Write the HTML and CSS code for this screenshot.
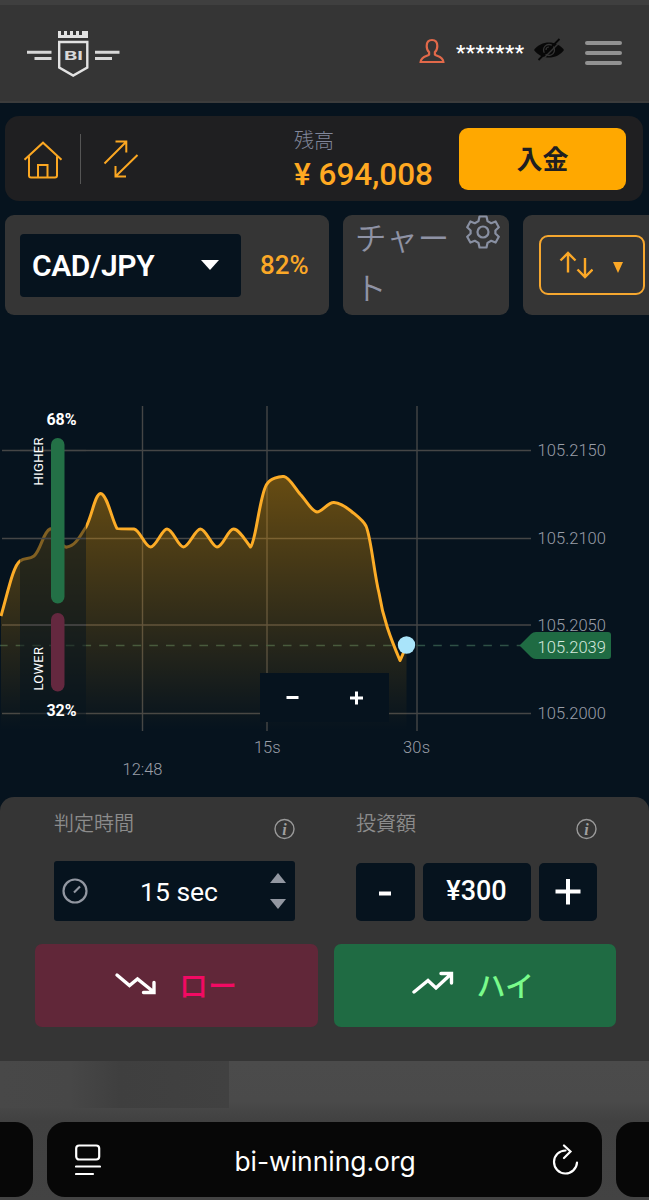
FILE: index.html
```
<!DOCTYPE html>
<html lang="ja">
<head>
  <meta charset="utf-8">
  <title>BI Winning</title>
  <link rel="stylesheet" href="styles.css">
</head>
<body>
  <header class="header">
    <svg class="logo" width="94" height="48" viewBox="0 0 94 48">
      <path class="logo-fill" d="M31 1h3v4h3V1h3v4h3V1h3v4h3V1h3v4h3V1h3v4h0V1h3v7H31z"/>
      <path class="logo-line" d="M32.2 12h28.100v25.500L46.200 45.500 32.200 37.500z"/>
      <path class="logo-wing" d="M0 22.200h24.500M7.500 28.400h17M68 22.200h24.500M68 28.400h17"/>
      <text class="logo-text" x="37" y="30" textLength="19" lengthAdjust="spacingAndGlyphs">BI</text>
    </svg>
    <div class="user">
      <svg class="user-icon" width="26" height="26" viewBox="0 0 26 26">
        <path d="M13 2c-4 0-5.300 3-5.300 6 0 3 1 5 2.400 6.200v2.400C9 18 2 18.200 1.600 24h22.800C24 18.200 17 18 15.900 16.600v-2.400C17.300 13 18.300 11 18.300 8c0-3-1.300-6-5.300-6z"/>
      </svg>
      <span class="user-name">*******</span>
      <svg class="eye" width="30" height="24" viewBox="0 0 30 24">
        <path d="M0 12C7 2 23 2 30 12 23 22 7 22 0 12z" fill="#080808"/>
        <circle cx="15" cy="12" r="5.500" fill="none" stroke="#353535" stroke-width="1.300"/>
        <path d="M12 12a3 3 0 0 1 3-3" fill="none" stroke="#353535" stroke-width="1.200"/>
        <path d="M7 23L28 2" stroke="#353535" stroke-width="1.500"/>
        <path d="M4.500 22L25.500 1" stroke="#080808" stroke-width="1.800"/>
      </svg>
    </div>
    <div class="burger"><span></span><span></span><span></span></div>
  </header>

  <section class="account">
    <svg class="home" width="40" height="38" viewBox="0 0 40 38">
      <path d="M1.500 18.800L20 1.700l18.500 17.100M6 15.500V34.500q0 2 2 2h24q2 0 2-2V15.500M15 36.500V24h9.500v12.500"/>
    </svg>
    <div class="divider"></div>
    <svg class="swap" width="36" height="40" viewBox="0 0 36 40">
      <path d="M1.500 24.500L23 3M12.500 2.500h10.800v11M34.500 16L12.500 37.500M12.500 27v10.500H23"/>
    </svg>
    <div class="balance">
      <div class="balance-label">残高</div>
      <div class="balance-value">¥ 694,008</div>
    </div>
    <button class="deposit">入金</button>
  </section>

  <section class="toolbar">
    <div class="card pair-card">
      <div class="pair"><span>CAD/JPY</span><i class="caret"></i></div>
      <span class="payout">82%</span>
    </div>
    <div class="card chart-card">
      <span class="chart-label">チャート</span>
      <svg class="gear" width="34" height="34" viewBox="0 0 34 34">
        <path d="M13.500 1.500h7l1 4.600 3.700 2.100 4.400-1.700 3.200 5.800-3.400 3.200v3l3.400 3.200-3.200 5.800-4.400-1.700-3.700 2.100-1 4.600h-7l-1-4.600-3.700-2.100-4.400 1.700-3.200-5.800 3.400-3.200v-3l-3.400-3.200 3.200-5.800 4.400 1.700 3.700-2.100z"/>
        <circle cx="17" cy="17" r="5.500"/>
      </svg>
    </div>
    <div class="card trade-card">
      <div class="trade-type">
        <svg width="34" height="28" viewBox="0 0 34 28">
          <path d="M9 21.500V2M1.500 9.500L9 2l7.500 7.500M26 7v19M18.500 18.500L26 26l7.500-7.500"/>
        </svg>
        <i class="caret-small"></i>
      </div>
    </div>
  </section>

  <section class="chart">
    <svg width="649" height="482" viewBox="0 315 649 482">
      <defs>
        <linearGradient id="area" gradientUnits="userSpaceOnUse" x1="0" y1="476" x2="0" y2="730">
          <stop offset="0" stop-color="#ffa500" stop-opacity=".39"/>
          <stop offset="1" stop-color="#ffa500" stop-opacity="0"/>
        </linearGradient>
      </defs>
      <g class="grid">
        <path d="M2 450.500H531M2 538.500H531M2 625H531M2 713.500H531"/>
        <path d="M142.500 406V731M267 406V731M417 406V731"/>
      </g>
      <path class="price-line" d="M-1 645.500H530"/>
      <path fill="url(#area)" d="M1 616C8 592 13 566 20 561C25 557 29 560 34 556C41 550 43 532 50 529C56 527 60 549 67 547C76 546 81 534 86 527C92 516 95 494 100.500 493.500C107 494 112 520 117 528.500Q118 529 134 529C140 530 145 547 150.500 547C156 547 162 529 167 529C173 529 178 547 183.500 547C189 547 195 529 200.500 529C206 529 212 547 217 547C223 547 228 529 233.500 529C239 529 245 540 250.500 547C256 542 260 492 267 484C270 479 279 476 284 476.500C289 477 295 488 300 494C306 500 311 511 317 512C322 512 328 502 334 502.500C340 503 346 507 351 511C357 516 363 520 366 526C371 537 374 573 379 593C383 618 390 637 400 660.500C402 657 404 651 406.500 645V730H1z"/>
      <path class="curve" d="M1 616C8 592 13 566 20 561C25 557 29 560 34 556C41 550 43 532 50 529C56 527 60 549 67 547C76 546 81 534 86 527C92 516 95 494 100.500 493.500C107 494 112 520 117 528.500Q118 529 134 529C140 530 145 547 150.500 547C156 547 162 529 167 529C173 529 178 547 183.500 547C189 547 195 529 200.500 529C206 529 212 547 217 547C223 547 228 529 233.500 529C239 529 245 540 250.500 547C256 542 260 492 267 484C270 479 279 476 284 476.500C289 477 295 488 300 494C306 500 311 511 317 512C322 512 328 502 334 502.500C340 503 346 507 351 511C357 516 363 520 366 526C371 537 374 573 379 593C383 618 390 637 400 660.500C402 657 404 651 406.500 645"/>
      <circle cx="406.500" cy="645" r="8.700" fill="#a9e4fa"/>

      <!-- sentiment gauge -->
      <rect x="20" y="405" width="66" height="320" fill="#06131e" opacity=".5"/>
      <path class="grid" d="M20 450.500H86M20 538.500H86M20 625H86"/>
      <rect x="51" y="438" width="13.500" height="165.500" rx="6.700" fill="#237046"/>
      <rect x="51" y="613" width="13.500" height="78.500" rx="6.700" fill="#64283f"/>
      <text class="gauge-pct" x="61.500" y="425">68%</text>
      <text class="gauge-pct" x="61.500" y="716">32%</text>
      <text class="gauge-name" transform="translate(43 485.500) rotate(-90)" textLength="48">HIGHER</text>
      <text class="gauge-name" transform="translate(43 690.500) rotate(-90)" textLength="43.500">LOWER</text>

      <path d="M519.500 645.500L531 634q2-2 5-2H608q3 0 3 3V656q0 3-3 3H536q-3 0-5-2z" fill="#1f6b43"/>
      <g class="axis">
        <text x="537.500" y="456" textLength="68.500">105.2150</text>
        <text x="537.500" y="544" textLength="68.500">105.2100</text>
        <text x="537.500" y="631" textLength="68.500">105.2050</text>
        <text x="537.500" y="652.500" textLength="68.500" class="current">105.2039</text>
        <text x="537.500" y="719" textLength="68.500">105.2000</text>
        <text x="122.500" y="774.500" textLength="40">12:48</text>
        <text x="254" y="753" textLength="26.500">15s</text>
        <text x="403" y="753" textLength="27">30s</text>
      </g>
    </svg>
    <div class="zoom">
      <svg width="129" height="49" viewBox="0 0 129 49">
        <path d="M26.500 24.500h12M90 25h13M96.500 18.500v13"/>
      </svg>
    </div>
  </section>

  <section class="panel">
    <div class="fields">
      <div class="field">
        <div class="field-head">
          <span>判定時間</span>
          <svg class="info" width="22" height="22" viewBox="0 0 22 22"><circle cx="11.500" cy="11" r="9.500"/><text x="11.500" y="16.500">i</text></svg>
        </div>
        <div class="time">
          <svg width="26" height="26" viewBox="0 0 26 26">
            <circle cx="13" cy="13" r="11.500"/><path d="M12 14.500L18 8.500"/>
          </svg>
          <span class="time-value">15 sec</span>
          <div class="stepper"><i class="up"></i><i class="down"></i></div>
        </div>
      </div>
      <div class="field">
        <div class="field-head">
          <span>投資額</span>
          <svg class="info" width="22" height="22" viewBox="0 0 22 22"><circle cx="11.500" cy="11" r="9.500"/><text x="11.500" y="16.500">i</text></svg>
        </div>
        <div class="amount">
          <button class="step"><svg width="26" height="26" viewBox="0 0 26 26"><path d="M7 14.500h12"/></svg></button>
          <div class="amount-value">¥300</div>
          <button class="step"><svg width="26" height="26" viewBox="0 0 26 26"><path d="M.5 12.500h25M13 0v25.500"/></svg></button>
        </div>
      </div>
    </div>
    <div class="actions">
      <button class="action low">
        <svg width="42" height="24" viewBox="0 0 42 24"><path d="M3 4L15.500 14.500 23.500 8 38.500 20M29.500 21.500H40V11.500"/></svg>
        <span>ロー</span>
      </button>
      <button class="action high">
        <svg width="42" height="24" viewBox="0 0 42 24"><path d="M2 21L16 9.500 24 17 38.500 3.500M29 2.500H39.500V12"/></svg>
        <span>ハイ</span>
      </button>
    </div>
  </section>

  <footer class="browser">
    <div class="page-peek"></div>
    <div class="tabs">
      <div class="tab tab-prev"></div>
      <div class="tab tab-current">
        <svg width="26" height="32" viewBox="0 0 26 32">
          <rect x="1.200" y="1.500" width="23" height="14" rx="3"/><path d="M1 22.500h24M1 30h17"/>
        </svg>
        <span class="url">bi-winning.org</span>
        <svg width="27" height="32" viewBox="0 0 27 32">
          <path d="M13.500 6.500A11.500 11.500 0 1 0 25 18.500M12 1.500L18.500 7.500 12 14"/>
        </svg>
      </div>
      <div class="tab tab-next"></div>
    </div>
  </footer>
</body>
</html>
```
FILE: styles.css
```
* {
  box-sizing: border-box;
}

body {
  margin: 0;
  height: 1200px;
  overflow: hidden;
  background: #06131e;
  color: #fff;
  font-family: Roboto, "Noto Sans CJK JP", sans-serif;
}

button {
  border: 0;
  padding: 0;
  color: inherit;
  font-family: inherit;
}

svg {
  display: block;
  flex-shrink: 0;
}

/* header */
.header {
  display: flex;
  align-items: center;
  height: 103px;
  padding: 0 27px 3px;
  background: #353535;
  border-top: 5px solid #3f3f3f;
  border-bottom: 2px solid #3c3c3c;
}

.logo {
  margin-top: 4px;
}

.logo-fill {
  fill: #e2e2e2;
}

.logo-line {
  fill: none;
  stroke: #e2e2e2;
  stroke-width: 2.4;
}

.logo-wing {
  stroke: #d8d8d8;
  stroke-width: 3;
}

.logo-text {
  fill: #d8d8d8;
  font: bold 12px Inter, sans-serif;
}

.user {
  display: flex;
  align-items: center;
  margin-left: auto;
}

.user-icon {
  margin-top: -2px;
  fill: none;
  stroke: #e2694a;
  stroke-width: 2.2;
}

.user-name {
  width: 70px;
  margin: 3px 0 0 11px;
  font-size: 21px;
  font-weight: 500;
  line-height: 26px;
  letter-spacing: .5px;
}

.eye {
  margin: -4px 0 0 8px;
}

.burger {
  display: flex;
  flex-direction: column;
  gap: 6px;
  width: 37px;
  margin: 3px 0 0 21px;
}

.burger span {
  height: 4px;
  border-radius: 2px;
  background: #929292;
}

/* account bar */
.account {
  display: flex;
  align-items: center;
  height: 85px;
  margin: 13px 6px 14px 5px;
  padding: 0 17px 0 18px;
  border-radius: 14px;
  background: #1f1f21;
}

.home,
.swap {
  fill: none;
  stroke: #fba722;
  stroke-width: 2;
}

.home {
  margin-top: 2px;
}

.divider {
  width: 1px;
  height: 50px;
  margin: 0 22px 0 17px;
  background: #555;
}

.balance {
  margin-left: auto;
  width: 165px;
  padding-top: 6px;
}

.balance-label {
  color: #80869a;
  font-size: 20px;
  font-weight: 300;
  line-height: 26px;
}

.balance-value {
  color: #ffa922;
  font-size: 31.5px;
  font-weight: 500;
  line-height: 42px;
  white-space: nowrap;
}

.deposit {
  width: 167px;
  height: 62px;
  padding-bottom: 3px;
  border-radius: 9px;
  background: #ffa800;
  color: #1f1f21;
  font-size: 26px;
  font-weight: 700;
}

/* toolbar */
.toolbar {
  display: flex;
  gap: 14px;
  height: 100px;
  padding-left: 5px;
}

.card {
  flex-shrink: 0;
  display: flex;
  border-radius: 9px;
  background: #353535;
}

.pair-card {
  align-items: center;
  width: 324px;
  padding-left: 15px;
}

.pair {
  display: flex;
  align-items: center;
  justify-content: space-between;
  width: 221px;
  height: 63px;
  padding: 0 22px 0 12px;
  border-radius: 4px;
  background: #06131e;
  font-size: 30px;
  font-weight: 600;
  letter-spacing: -.4px;
}

.caret {
  border: 9px solid transparent;
  border-top: 10px solid #fff;
  border-bottom: 0;
}

.payout {
  margin-left: 19px;
  color: #fba827;
  font-size: 26px;
  font-weight: 500;
}

.chart-card {
  width: 166px;
  padding-left: 12px;
}

.chart-label {
  width: 111px;
  color: #8f93a5;
  font-size: 31.5px;
  font-weight: 350;
  line-height: 50px;
  word-break: break-all;
}

.gear {
  fill: none;
  stroke: #8990a2;
  stroke-width: 2.2;
  stroke-linejoin: round;
}

.trade-card {
  width: 150px;
  padding: 20px 0 0 15.5px;
}

.trade-type {
  display: flex;
  align-items: center;
  width: 106px;
  height: 60px;
  padding-left: 18px;
  border: 2px solid #f6a72f;
  border-radius: 9px;
}

.trade-type svg {
  fill: none;
  stroke: #fba827;
  stroke-width: 2.4;
}

.caret-small {
  margin: 4px 0 0 20px;
  border: 5.5px solid transparent;
  border-top: 11px solid #fba827;
  border-bottom: 0;
}

/* chart */
.chart {
  position: relative;
  height: 482px;
}

.grid {
  fill: none;
  stroke: #454646;
  stroke-width: 1.4;
}

.price-line {
  stroke: #2e5046;
  stroke-width: 1.5;
  stroke-dasharray: 8.6 8.1;
}

.curve {
  fill: none;
  stroke: #fcac27;
  stroke-width: 3;
  stroke-linejoin: round;
}

.gauge-pct {
  fill: #fff;
  font-size: 16px;
  font-weight: 700;
  text-anchor: middle;
}

.gauge-name {
  fill: #fff;
  font-size: 13px;
}

.axis {
  fill: #9a9ea8;
  font-size: 16.5px;
  font-weight: 300;
}

.axis .current {
  fill: #d6e9df;
}

.zoom {
  position: absolute;
  left: 260px;
  top: 358px;
  background: #06131e;
}

.zoom path {
  stroke: #fff;
  stroke-width: 3;
}

/* order panel */
.panel {
  height: 264px;
  padding-top: 12px;
  border-radius: 14px 14px 0 0;
  background: #353535;
}

.fields {
  display: flex;
  gap: 61px;
  padding-left: 54px;
}

.field {
  width: 241px;
}

.field-head {
  display: flex;
  justify-content: space-between;
  height: 52px;
  color: #8c8c8c;
  font-size: 20px;
  font-weight: 350;
  line-height: 31px;
}

.info {
  margin-top: 9px;
}

.info circle {
  fill: none;
  stroke: #999;
  stroke-width: 1.4;
}

.info text {
  fill: #a0a0a0;
  font: italic 700 16px "Liberation Serif", serif;
  text-anchor: middle;
}

.time {
  display: flex;
  align-items: center;
  height: 60px;
  padding: 0 9px 0 8px;
  border-radius: 3px;
  background: #06131e;
}

.time svg {
  fill: none;
  stroke: #9297a1;
  stroke-width: 2.2;
}

.time-value {
  flex: 1;
  padding-top: 1px;
  font-size: 26.5px;
  text-align: center;
}

.stepper {
  display: flex;
  flex-direction: column;
  gap: 16px;
}

.up,
.down {
  border: 8px solid transparent;
}

.up {
  border-top: 0;
  border-bottom: 10px solid #9297a1;
}

.down {
  border-bottom: 0;
  border-top: 10px solid #9297a1;
}

.amount {
  display: flex;
  gap: 8px;
  height: 58px;
  margin-top: 2px;
}

.step,
.amount-value {
  display: flex;
  align-items: center;
  justify-content: center;
  border-radius: 5px;
  background: #06131e;
}

.step {
  width: 58.5px;
}

.step path {
  stroke: #fff;
  stroke-width: 4;
}

.amount-value {
  flex: 1;
  padding-bottom: 3px;
  font-size: 27px;
  font-weight: 500;
}

.actions {
  display: flex;
  gap: 16px;
  margin-top: 23px;
  padding-left: 35px;
}

.action {
  display: flex;
  align-items: center;
  width: 282.5px;
  height: 83px;
  padding: 0 0 3px 78px;
  border-radius: 7px;
  font-size: 29px;
  font-weight: 500;
}

.action svg {
  margin-top: -3px;
  fill: none;
  stroke: #fff;
  stroke-width: 3.4;
  stroke-linecap: round;
}

.action span {
  margin-left: 23px;
}

.low {
  padding-left: 79px;
  background: #612739;
  color: #f20a63;
}

.high {
  background: #1f6b43;
  color: #79fb8b;
}

/* browser bar */
.browser {
  height: 139px;
  background: linear-gradient(#4b4b4b, #4a4a4a 40px, #414141 60px, #434343);
}

.page-peek {
  width: 229px;
  height: 47px;
  background: linear-gradient(90deg, #484848, #474747 70px, #3f3f3f 120px, #414141);
}

.tabs {
  display: flex;
  gap: 14px;
  height: 75px;
  margin-top: 14px;
}

.tab {
  flex-shrink: 0;
  background: #070707;
}

.tab-prev {
  width: 33px;
  border-radius: 0 18px 18px 0;
}

.tab-current {
  display: flex;
  align-items: center;
  justify-content: space-between;
  width: 555px;
  padding: 0 23px 0 28px;
  border-radius: 18px;
  font-family: Inter, sans-serif;
  font-size: 26.4px;
}

.url {
  padding: 2px 3px 0 0;
}

.tab-current svg {
  fill: none;
  stroke: #fff;
  stroke-width: 2.2;
  stroke-linecap: round;
}

.tab-next {
  width: 33px;
  border-radius: 18px 0 0 18px;
}
```
